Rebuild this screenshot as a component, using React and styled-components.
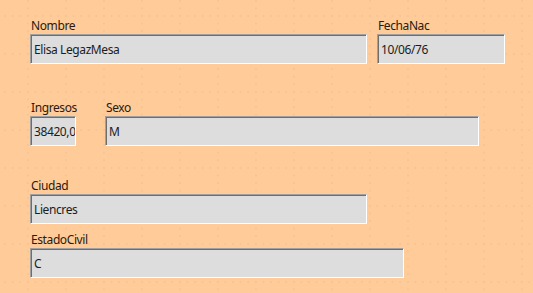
import React from "react";
import styled, { createGlobalStyle } from "styled-components";

const Global = createGlobalStyle`
  html, body { margin: 0; padding: 0; }
  body { font-family: "Noto Sans", "Liberation Sans", sans-serif; }
`;

const Canvas = styled.div`
  width: 533px;
  height: 293px;
  box-sizing: border-box;
  overflow: hidden;
  background-color: #ffcc99;
  background-image:
    radial-gradient(circle at 1px 1px, #f6c495 0.7px, transparent 1.1px),
    radial-gradient(circle at 1px 1px, #f6c495 0.7px, transparent 1.1px);
  background-size: 7.6px 38px, 38px 7.6px;
  background-position: 27px 15px, 27px 15px;
  padding: 18px 0 0 30px;
  display: flex;
  flex-direction: column;
`;

const Row = styled.div`
  display: flex;
  gap: ${(p) => p.$gap || 10}px;
  margin-top: ${(p) => p.$top || 0}px;
`;

const Group = styled.div`
  display: flex;
  flex-direction: column;
  width: ${(p) => p.$w}px;
`;

const Label = styled.div`
  height: 16px;
  font-size: 12px;
  line-height: 15px;
  letter-spacing: -0.4px;
  color: #2a1a10;
  white-space: nowrap;
  padding-left: 1px;
`;

const Field = styled.div`
  height: 30px;
  box-sizing: border-box;
  background: #dddddd;
  border-style: solid;
  border-width: 1px;
  border-color: #a0a0a0 #ffffff #ffffff #a0a0a0;
  box-shadow: inset 1px 1px 0 #6e6e6e;
  font-size: 12px;
  letter-spacing: -0.4px;
  line-height: 30px;
  color: #1c1c1c;
  padding-left: 3px;
  padding-top: 2px;
  display: flex;
  align-items: center;
  white-space: nowrap;
  overflow: hidden;
`;

export default function App() {
  return (
    <>
      <Global />
      <Canvas>
        <Row>
          <Group $w={337}>
            <Label>Nombre</Label>
            <Field>Elisa LegazMesa</Field>
          </Group>
          <Group $w={128}>
            <Label>FechaNac</Label>
            <Field>10/06/76</Field>
          </Group>
        </Row>
        <Row $top={36} $gap={29}>
          <Group $w={46}>
            <Label>Ingresos</Label>
            <Field>38420,0</Field>
          </Group>
          <Group $w={374}>
            <Label>Sexo</Label>
            <Field>M</Field>
          </Group>
        </Row>
        <Row $top={32}>
          <Group $w={337}>
            <Label>Ciudad</Label>
            <Field>Liencres</Field>
          </Group>
        </Row>
        <Row $top={8}>
          <Group $w={374}>
            <Label>EstadoCivil</Label>
            <Field>C</Field>
          </Group>
        </Row>
      </Canvas>
    </>
  );
}
